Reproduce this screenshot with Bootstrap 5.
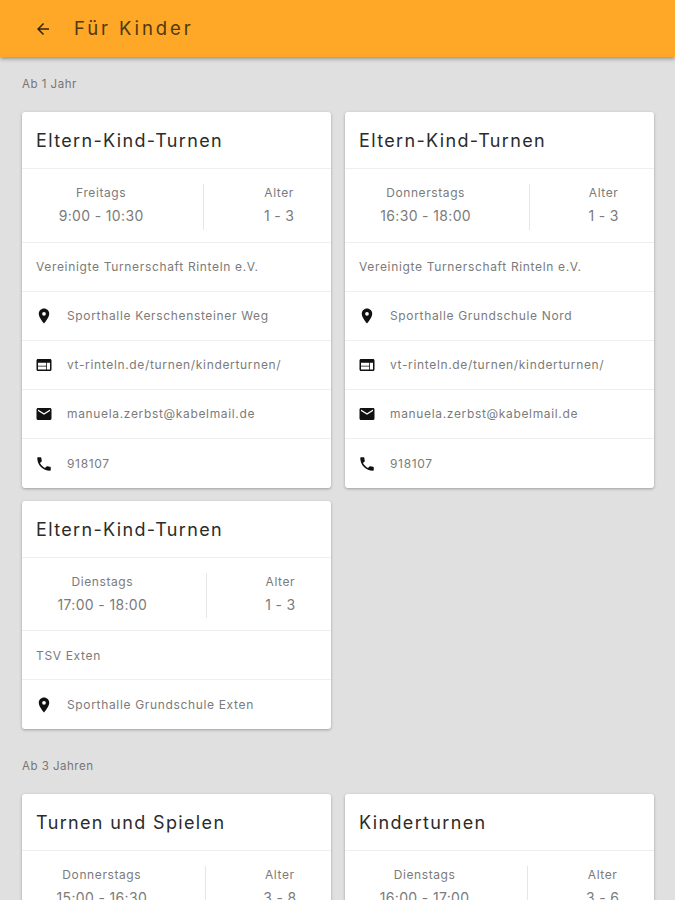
<!DOCTYPE html>
<html lang="de">
<head>
<meta charset="utf-8">
<title>Für Kinder</title>
<link href="https://cdn.jsdelivr.net/npm/bootstrap@5.3.0/dist/css/bootstrap.min.css" rel="stylesheet">
<style>
html,body{height:900px;overflow:hidden}
body{background:#e0e0e0;font-family:Inter,"Liberation Sans",sans-serif;color:#6f6f6f}
.topbar{height:57px;background:#ffa726;box-shadow:0 2px 4px rgba(0,0,0,.35);padding-left:34px}
.topbar svg{width:18px;height:18px;fill:#33260c;margin-right:22px}
.topbar-title{font-size:18.5px;letter-spacing:2.9px;color:#4d3a12}
.sec-label{font-size:11.5px;letter-spacing:.5px;color:#757575;height:55px;padding:20px 0 0 22px;line-height:15px}
.sec-label.later{height:64.6px;padding-top:29.6px}
.kurs-wrap{padding:0 21px 0 22px}
.kurs-row{--bs-gutter-x:14px;--bs-gutter-y:13px;align-items:flex-start}
.kurs-card{border:0;border-radius:3px;box-shadow:0 1px 3px rgba(0,0,0,.3);overflow:hidden}
.kurs-card .list-group-item{border-color:#eeeeee;padding:1px 14px 0;display:flex;align-items:center;font-size:12px;letter-spacing:.66px;height:49px;color:#7b7b7b}
.kurs-title{font-size:18px;letter-spacing:1.35px;color:#2b2b2b;height:57px;padding:1px 14px 0;border-bottom:1px solid #eeeeee;line-height:56px;font-weight:400}
.kurs-times{padding:15px 0 12px;height:73.6px;text-align:center;border-bottom:1px solid #eeeeee}
.kurs-cell{flex:1 1 auto;color:#7b7b7b;line-height:1;padding-right:23px}
.kurs-cell+.kurs-cell{border-left:1px solid #e6e6e6;padding-right:0;padding-left:23px}
.kurs-cell div:first-child{font-size:12px;letter-spacing:.6px;margin-bottom:9px;margin-top:3px}
.kurs-cell div:last-child{font-size:14px;letter-spacing:.35px;padding-top:1px}
.kurs-card svg{width:18px;height:18px;flex:none;margin:0 14px 0 -1px;fill:#111}
</style>
</head>
<body>
<header class="topbar d-flex align-items-center">
<svg viewBox="0 0 24 24"><path d="M20 11H7.83l5.59-5.59L12 4l-8 8 8 8 1.41-1.41L7.83 13H20v-2z"/></svg>
<span class="topbar-title">Für Kinder</span>
</header>

<div class="sec-label">Ab 1 Jahr</div>
<div class="kurs-wrap">
<div class="row kurs-row">
<div class="col-6">
<div class="card kurs-card">
<div class="kurs-title">Eltern-Kind-Turnen</div>
<div class="kurs-times d-flex"><div class="kurs-cell"><div>Freitags</div><div>9:00 - 10:30</div></div><div class="kurs-cell"><div>Alter</div><div>1 - 3</div></div></div>
<ul class="list-group list-group-flush">
<li class="list-group-item">Vereinigte Turnerschaft Rinteln e.V.</li>
<li class="list-group-item"><svg viewBox="0 0 24 24"><path d="M12 2C8.13 2 5 5.13 5 9c0 5.25 7 13 7 13s7-7.75 7-13c0-3.87-3.13-7-7-7zm0 9.5a2.5 2.5 0 0 1 0-5 2.5 2.5 0 0 1 0 5z"/></svg>Sporthalle Kerschensteiner Weg</li>
<li class="list-group-item"><svg viewBox="0 0 24 24"><path d="M20 4H4c-1.1 0-1.99.9-1.99 2L2 18c0 1.1.9 2 2 2h16c1.1 0 2-.9 2-2V6c0-1.1-.9-2-2-2zm-5 14H4v-4h11v4zm0-5H4V9h11v4zm5 5h-4V9h4v9z"/></svg>vt-rinteln.de/turnen/kinderturnen/</li>
<li class="list-group-item"><svg viewBox="0 0 24 24"><path d="M20 4H4c-1.1 0-1.99.9-1.99 2L2 18c0 1.1.9 2 2 2h16c1.1 0 2-.9 2-2V6c0-1.1-.9-2-2-2zm0 4l-8 5-8-5V6l8 5 8-5v2z"/></svg>manuela.zerbst@kabelmail.de</li>
<li class="list-group-item"><svg viewBox="0 0 24 24"><path d="M6.62 10.79c1.44 2.83 3.76 5.14 6.59 6.59l2.2-2.2c.27-.27.67-.36 1.02-.24 1.12.37 2.33.57 3.57.57.55 0 1 .45 1 1V20c0 .55-.45 1-1 1-9.39 0-17-7.61-17-17 0-.55.45-1 1-1h3.5c.55 0 1 .45 1 1 0 1.25.2 2.45.57 3.57.11.35.03.74-.25 1.02l-2.2 2.2z"/></svg>918107</li>
</ul>
</div>
</div>
<div class="col-6">
<div class="card kurs-card">
<div class="kurs-title">Eltern-Kind-Turnen</div>
<div class="kurs-times d-flex"><div class="kurs-cell"><div>Donnerstags</div><div>16:30 - 18:00</div></div><div class="kurs-cell"><div>Alter</div><div>1 - 3</div></div></div>
<ul class="list-group list-group-flush">
<li class="list-group-item">Vereinigte Turnerschaft Rinteln e.V.</li>
<li class="list-group-item"><svg viewBox="0 0 24 24"><path d="M12 2C8.13 2 5 5.13 5 9c0 5.25 7 13 7 13s7-7.75 7-13c0-3.87-3.13-7-7-7zm0 9.5a2.5 2.5 0 0 1 0-5 2.5 2.5 0 0 1 0 5z"/></svg>Sporthalle Grundschule Nord</li>
<li class="list-group-item"><svg viewBox="0 0 24 24"><path d="M20 4H4c-1.1 0-1.99.9-1.99 2L2 18c0 1.1.9 2 2 2h16c1.1 0 2-.9 2-2V6c0-1.1-.9-2-2-2zm-5 14H4v-4h11v4zm0-5H4V9h11v4zm5 5h-4V9h4v9z"/></svg>vt-rinteln.de/turnen/kinderturnen/</li>
<li class="list-group-item"><svg viewBox="0 0 24 24"><path d="M20 4H4c-1.1 0-1.99.9-1.99 2L2 18c0 1.1.9 2 2 2h16c1.1 0 2-.9 2-2V6c0-1.1-.9-2-2-2zm0 4l-8 5-8-5V6l8 5 8-5v2z"/></svg>manuela.zerbst@kabelmail.de</li>
<li class="list-group-item"><svg viewBox="0 0 24 24"><path d="M6.62 10.79c1.44 2.83 3.76 5.14 6.59 6.59l2.2-2.2c.27-.27.67-.36 1.02-.24 1.12.37 2.33.57 3.57.57.55 0 1 .45 1 1V20c0 .55-.45 1-1 1-9.39 0-17-7.61-17-17 0-.55.45-1 1-1h3.5c.55 0 1 .45 1 1 0 1.25.2 2.45.57 3.57.11.35.03.74-.25 1.02l-2.2 2.2z"/></svg>918107</li>
</ul>
</div>
</div>
<div class="col-6">
<div class="card kurs-card">
<div class="kurs-title">Eltern-Kind-Turnen</div>
<div class="kurs-times d-flex"><div class="kurs-cell"><div>Dienstags</div><div>17:00 - 18:00</div></div><div class="kurs-cell"><div>Alter</div><div>1 - 3</div></div></div>
<ul class="list-group list-group-flush">
<li class="list-group-item">TSV Exten</li>
<li class="list-group-item"><svg viewBox="0 0 24 24"><path d="M12 2C8.13 2 5 5.13 5 9c0 5.25 7 13 7 13s7-7.75 7-13c0-3.87-3.13-7-7-7zm0 9.5a2.5 2.5 0 0 1 0-5 2.5 2.5 0 0 1 0 5z"/></svg>Sporthalle Grundschule Exten</li>
</ul>
</div>
</div>
</div>
</div>

<div class="sec-label later">Ab 3 Jahren</div>
<div class="kurs-wrap">
<div class="row kurs-row">
<div class="col-6">
<div class="card kurs-card">
<div class="kurs-title">Turnen und Spielen</div>
<div class="kurs-times d-flex"><div class="kurs-cell"><div>Donnerstags</div><div>15:00 - 16:30</div></div><div class="kurs-cell"><div>Alter</div><div>3 - 8</div></div></div>
</div>
</div>
<div class="col-6">
<div class="card kurs-card">
<div class="kurs-title">Kinderturnen</div>
<div class="kurs-times d-flex"><div class="kurs-cell"><div>Dienstags</div><div>16:00 - 17:00</div></div><div class="kurs-cell"><div>Alter</div><div>3 - 6</div></div></div>
</div>
</div>
</div>
</div>
<script src="https://cdn.jsdelivr.net/npm/bootstrap@5.3.0/dist/js/bootstrap.bundle.min.js"></script>
</body>
</html>
